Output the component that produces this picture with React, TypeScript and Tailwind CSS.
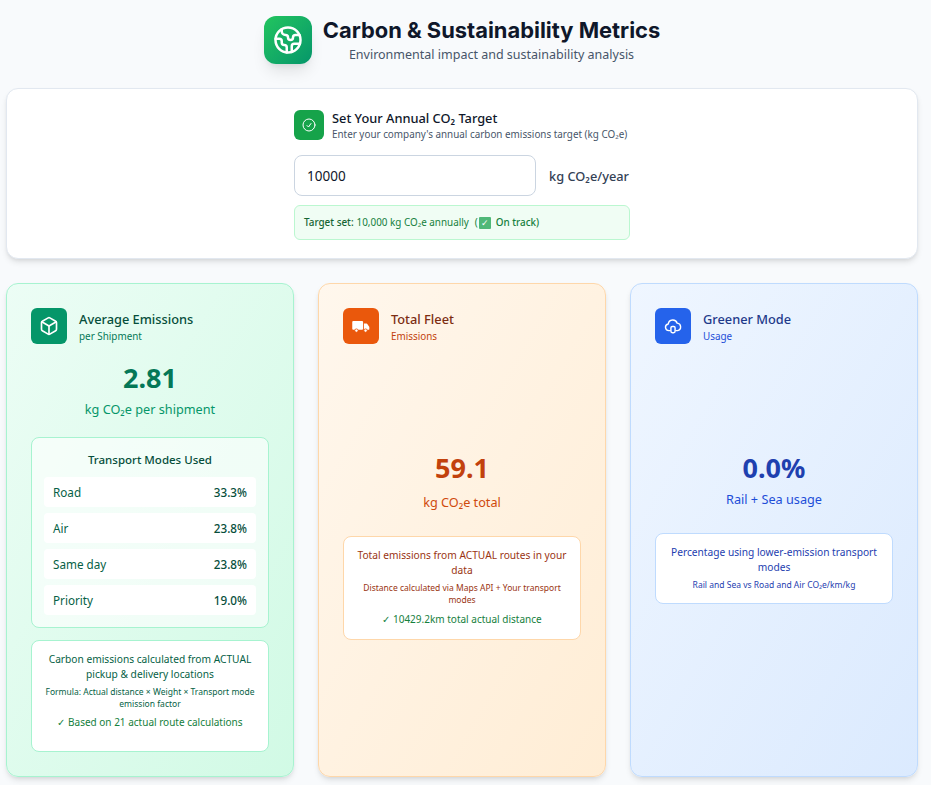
import { Earth, Box } from 'lucide-react'
import { HiOutlineCheckCircle } from 'react-icons/hi2'
import type { ReactNode } from 'react'

const modes = [
  { name: 'Road', pct: '33.3%' },
  { name: 'Air', pct: '23.8%' },
  { name: 'Same day', pct: '23.8%' },
  { name: 'Priority', pct: '19.0%' },
]

function CloudIcon() {
  return (
    <svg viewBox="0 0 24 24" className="w-5 h-5" fill="none" stroke="currentColor" strokeWidth="1.7" strokeLinecap="round" strokeLinejoin="round">
      <path d="M8.5 17.5H7a4 4 0 0 1-.7-7.94A5.5 5.5 0 0 1 17 8.6a4.5 4.5 0 0 1 .5 8.9h-2" />
      <rect x="9.5" y="12.5" width="5" height="7.5" rx="1.6" />
    </svg>
  )
}

function TruckIcon() {
  return (
    <svg viewBox="0 0 24 24" className="w-5 h-5" fill="currentColor">
      <rect x="1.5" y="6" width="13" height="10.5" rx="1.2" />
      <path d="M15.5 9h3.2a1 1 0 0 1 .85.47l2.3 3.4a1 1 0 0 1 .15.53v2.1a1 1 0 0 1-1 1h-5.5z" />
      <circle cx="6.5" cy="17.5" r="2" stroke="#ea580c" strokeWidth="1" />
      <circle cx="17.5" cy="17.5" r="2" stroke="#ea580c" strokeWidth="1" />
    </svg>
  )
}

function CardHeader({ icon, iconBg, title, sub, titleColor, subColor }: {
  icon: ReactNode
  iconBg: string
  title: string
  sub: string
  titleColor: string
  subColor: string
}) {
  return (
    <div className="flex items-center gap-3">
      <div className={`w-9 h-9 rounded-md flex items-center justify-center text-white ${iconBg}`}>
        {icon}
      </div>
      <div className="pt-[2px]">
        <div className={`text-[12.8px] leading-[18px] font-medium ${titleColor}`}>{title}</div>
        <div className={`text-[9.9px] leading-[15px] mt-px ${subColor}`}>{sub}</div>
      </div>
    </div>
  )
}

export default function App() {
  return (
    <div className="min-h-[785px] h-[785px] overflow-hidden bg-[#f8fafc] pl-[6px] pr-[13px] font-['Noto_Sans',sans-serif]">
      {/* Header */}
      <div className="flex items-center justify-center gap-[11px] pt-4 h-[88px] pb-6">
        <div className="w-12 h-12 rounded-xl bg-gradient-to-br from-[#22c55e] to-[#059669] flex items-center justify-center text-white shadow-lg">
          <Earth className="w-[30px] h-[30px]" />
        </div>
        <div className="text-center">
          <h1 className="text-[21.9px] leading-[28px] font-bold text-[#0f172a] font-['Inter',sans-serif]">Carbon &amp; Sustainability Metrics</h1>
          <p className="text-[12.5px] leading-[20px] mt-px text-[#475569]">Environmental impact and sustainability analysis</p>
        </div>
      </div>

      {/* Target */}
      <div className="h-[171px] bg-white rounded-xl border border-[#e2e8f0] shadow-md flex justify-center pt-[21px]">
        <div className="w-[336px]">
          <div className="flex gap-2">
            <div className="w-[30px] h-[30px] rounded-md bg-[#16a34a] flex items-center justify-center text-white">
              <HiOutlineCheckCircle className="w-4 h-4" />
            </div>
            <div className="h-[30px]">
              <div className="text-[12.8px] leading-[16px] font-medium text-[#0f172a]">Set Your Annual CO₂ Target</div>
              <div className="text-[9.9px] leading-[14px] mt-px text-[#475569]">Enter your company's annual carbon emissions target (kg CO₂e)</div>
            </div>
          </div>
          <div className="flex items-center gap-[13px] mt-[15px]">
            <input
              readOnly
              value="10000"
              className="w-[242px] h-[41px] rounded-lg border border-[#cbd5e1] bg-white px-3 text-[13.5px] text-[#0f172a] outline-none"
            />
            <span className="text-[12.8px] font-medium mt-[2px] text-[#334155]">kg CO₂e/year</span>
          </div>
          <div className="mt-[9px] h-[35px] rounded-md border border-[#bbf7d0] bg-[#f0fdf4] px-[9px] flex items-center text-[9.9px] text-[#15803d]">
            <span className="font-medium text-[#166534]">Target set:</span>
            <span className="ml-[3px]">10,000 kg CO₂e annually</span>
            <span className="ml-[6px]">(</span>
            <span className="w-[12px] h-[12px] ml-px rounded-[1px] bg-[#4fb878] text-white text-[9px] leading-[12px] text-center">✓</span>
            <span className="ml-[5px] font-medium">On track)</span>
          </div>
        </div>
      </div>

      {/* Cards */}
      <div className="grid grid-cols-3 gap-6 mt-6">
        <div className="h-[494px] rounded-xl border border-[#a7f3d0] bg-gradient-to-br from-[#ecfdf5] to-[#d1fae5] shadow-md p-6 flex flex-col">
          <CardHeader
            icon={<Box className="w-5 h-5" />}
            iconBg="bg-[#059669]"
            title="Average Emissions"
            sub="per Shipment"
            titleColor="text-[#064e3b]"
            subColor="text-[#047857]"
          />
          <div className="text-center mt-[15px] text-[27px] leading-[38px] font-bold text-[#047857]">2.81</div>
          <div className="text-center mt-[2px] text-[12.7px] leading-[20px] text-[#059669]">kg CO₂e per shipment</div>
          <div className="mt-[18px] h-[192px] rounded-lg border border-[#a7f3d0] bg-white/60 px-3 pt-3">
            <div className="text-center text-[11.5px] leading-[20px] font-medium text-[#064e3b]">Transport Modes Used</div>
            <div className="flex flex-col gap-[6px] mt-[7px]">
              {modes.map((m) => (
                <div key={m.name} className="h-[30px] bg-white rounded pt-px flex items-center justify-between px-[9px] text-[11.7px]">
                  <span className="text-[#065f46]">{m.name}</span>
                  <span className="font-medium text-[#064e3b]">{m.pct}</span>
                </div>
              ))}
            </div>
          </div>
          <div className="mt-3 h-[113px] rounded-lg border border-[#a7f3d0] bg-white text-center px-2 pt-[11px]">
            <div className="text-[10.2px] leading-[15px] text-[#065f46]">Carbon emissions calculated from ACTUAL pickup &amp; delivery locations</div>
            <div className="text-[8.5px] leading-[12px] mt-[4px] text-[#065f46]">Formula: Actual distance × Weight × Transport mode emission factor</div>
            <div className="text-[10px] leading-[15px] mt-[5px] text-[#15803d]">✓ Based on 21 actual route calculations</div>
          </div>
        </div>

        <div className="h-[494px] rounded-xl border border-[#fed7aa] bg-gradient-to-br from-[#fff7ed] to-[#ffedd5] shadow-md p-6 flex flex-col">
          <CardHeader
            icon={<TruckIcon />}
            iconBg="bg-[#ea580c]"
            title="Total Fleet"
            sub="Emissions"
            titleColor="text-[#7c2d12]"
            subColor="text-[#c2410c]"
          />
          <div className="text-center mt-[105px] text-[27px] leading-[38px] font-bold text-[#c2410c]">59.1</div>
          <div className="text-center mt-[5px] text-[12.7px] leading-[20px] text-[#cf4a0c]">kg CO₂e total</div>
          <div className="mt-[24px] h-[104px] rounded-lg border border-[#fed7aa] bg-white text-center px-2 pt-[11px]">
            <div className="text-[10.2px] leading-[15px] text-[#9a3412]">Total emissions from ACTUAL routes in your data</div>
            <div className="text-[8.5px] leading-[12px] mt-[4px] text-[#9a3412]">Distance calculated via Maps API + Your transport modes</div>
            <div className="text-[10px] leading-[15px] mt-[6px] text-[#15803d]">✓ 10429.2km total actual distance</div>
          </div>
        </div>

        <div className="h-[494px] rounded-xl border border-[#bfdbfe] bg-gradient-to-br from-[#eff6ff] to-[#dbeafe] shadow-md p-6 flex flex-col">
          <CardHeader
            icon={<CloudIcon />}
            iconBg="bg-[#2563eb]"
            title="Greener Mode"
            sub="Usage"
            titleColor="text-[#1e3a8a]"
            subColor="text-[#1d4ed8]"
          />
          <div className="text-center mt-[105px] text-[27px] leading-[38px] font-bold text-[#1e40af]">0.0%</div>
          <div className="text-center mt-[2px] text-[12.7px] leading-[20px] text-[#1d4ed8]">Rail + Sea usage</div>
          <div className="mt-[24px] h-[71px] rounded-lg border border-[#bfdbfe] bg-white text-center px-2 pt-[11px]">
            <div className="text-[10.2px] leading-[15px] text-[#1e40af]">Percentage using lower-emission transport modes</div>
            <div className="text-[8.5px] leading-[12px] mt-[4px] text-[#1e40af]">Rail and Sea vs Road and Air CO₂e/km/kg</div>
          </div>
        </div>
      </div>
    </div>
  )
}
